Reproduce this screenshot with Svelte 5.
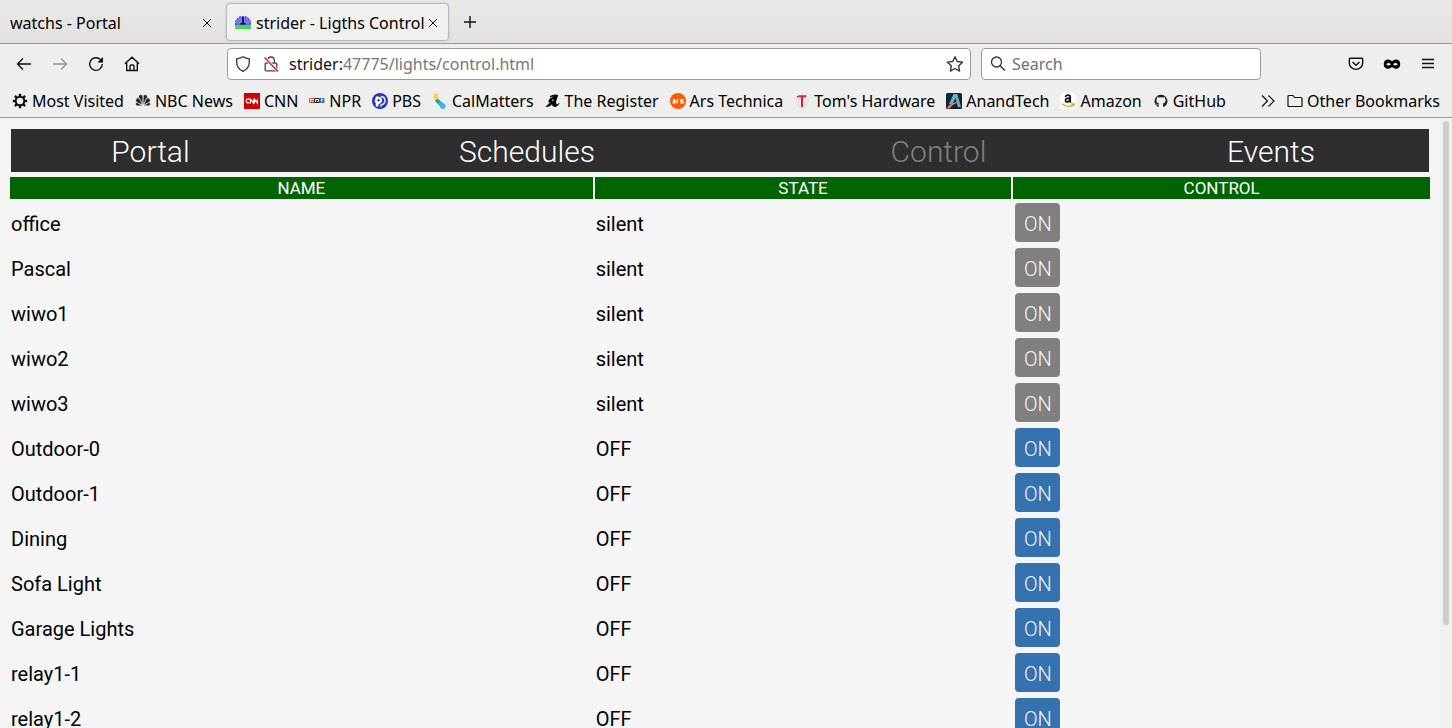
<script>
  const bookmarks = [
    { icon: 'gear', name: 'Most Visited' },
    { icon: 'nbc', name: 'NBC News' },
    { icon: 'cnn', name: 'CNN' },
    { icon: 'npr', name: 'NPR' },
    { icon: 'pbs', name: 'PBS' },
    { icon: 'cal', name: 'CalMatters' },
    { icon: 'register', name: 'The Register' },
    { icon: 'ars', name: 'Ars Technica' },
    { icon: 'toms', name: "Tom's Hardware" },
    { icon: 'anand', name: 'AnandTech' },
    { icon: 'amazon', name: 'Amazon' },
    { icon: 'github', name: 'GitHub' }
  ];
  const pages = ['Portal', 'Schedules', 'Control', 'Events'];
  const devices = [
    ['office', 'silent'],
    ['Pascal', 'silent'],
    ['wiwo1', 'silent'],
    ['wiwo2', 'silent'],
    ['wiwo3', 'silent'],
    ['Outdoor-0', 'OFF'],
    ['Outdoor-1', 'OFF'],
    ['Dining', 'OFF'],
    ['Sofa Light', 'OFF'],
    ['Garage Lights', 'OFF'],
    ['relay1-1', 'OFF'],
    ['relay1-2', 'OFF']
  ];
  const teeth = [0, 45, 90, 135, 180, 225, 270, 315];
</script>

<div class="browser">
  <header>
    <div class="tabs">
      <div class="tab">
        <span class="title">watchs - Portal</span>
        <button class="close" aria-label="Close tab"><svg width="16" height="16" viewBox="0 0 16 16"><path d="M4 4l8 8M12 4l-8 8" /></svg></button>
      </div>
      <div class="tab active">
        <svg class="fav" width="16" height="16" viewBox="0 0 16 16">
          <path d="M.5 10V6.500l1-2 1.500-1.500 2-1.300h6l2 1.300 1.500 1.500 1 2V10z" fill="#7777f6" stroke="#3838f0" stroke-dasharray="2 1" />
          <path d="M0 10h16v4H0z" fill="#3de04b" stroke="none" />
          <path d="M7.200 2h1.600v6h1.700v1.500h-5V8h1.700z" fill="#080820" stroke="none" />
        </svg>
        <span class="title">strider - Ligths Control</span>
        <button class="close" aria-label="Close tab"><svg width="16" height="16" viewBox="0 0 16 16"><path d="M4 4l8 8M12 4l-8 8" /></svg></button>
      </div>
      <button class="newtab" aria-label="New tab"><svg width="16" height="16" viewBox="0 0 16 16"><path d="M8 2v12M2 8h12" stroke-width="1.400" /></svg></button>
    </div>

    <div class="toolbar">
      <div class="navbuttons">
        <button aria-label="Back"><svg width="16" height="16" viewBox="0 0 16 16"><path d="M15 8H1.500M7 2.500L1.500 8 7 13.500" stroke-width="1.300" /></svg></button>
        <button aria-label="Forward" class="dim"><svg width="16" height="16" viewBox="0 0 16 16"><path d="M1 8h13.500M9 2.500L14.500 8 9 13.500" stroke-width="1.300" /></svg></button>
        <button aria-label="Reload"><svg width="16" height="16" viewBox="0 0 16 16"><path d="M12.500 3.600A6.300 6.300 0 1 0 14.300 8" stroke-width="1.400" /><path d="M15 1v5.500H9.500z" fill="#000" stroke="none" /></svg></button>
        <button aria-label="Home"><svg width="16" height="16" viewBox="0 0 16 16"><path d="M1 7.800L8 1.200l7 6.600M2.700 7v7.500h10.600V7M6 14.500V10.200q0-1.200 1.200-1.200h1.600q1.200 0 1.200 1.200v4.300" stroke-width="1.400" /></svg></button>
      </div>
      <div class="box url">
        <svg width="16" height="16" viewBox="0 0 16 16"><path d="M8 .8q3 1.800 6.300 2v3.400q0 6-6.300 9.100-6.300-3.100-6.300-9.100V2.800Q5 2.600 8 .8z" stroke="#333" stroke-width="1.300" /></svg>
        <svg class="lock" width="16" height="16" viewBox="0 0 16 16"><path d="M4.700 6.500V4.300a3.300 3.300 0 0 1 6.600 0v2.200M3 7.200h10q.8 0 .8.800v6q0 .8-.8.800H3q-.8 0-.8-.8V8q0-.8.800-.8z" stroke="#444" stroke-width="1.300" /><path d="M1.500 1.500l13.500 14" stroke="#fff" stroke-width="3" /><path d="M1.500 1.500l13.500 14" stroke="#f0104a" stroke-width="1.500" /></svg>
        <a class="address" href="#top"><b>strider:</b>47775/lights/control.html</a>
        <button aria-label="Bookmark this page"><svg width="18" height="18" viewBox="0 0 16 16"><path d="M8 1.500l2 4.300 4.700.6-3.400 3.200.8 4.700L8 12l-4.100 2.300.8-4.700L1.300 6.400 6 5.800z" stroke="#333" stroke-width="1.200" stroke-linejoin="round" /></svg></button>
      </div>
      <label class="box search">
        <svg width="16" height="16" viewBox="0 0 16 16"><circle cx="6.500" cy="6" r="5" stroke="#333" stroke-width="1.300" /><path d="M10 9.700l5 4.800" stroke="#333" stroke-width="1.400" /></svg>
        <input type="text" placeholder="Search" aria-label="Search" />
      </label>
      <div class="tools">
        <button aria-label="Save to Pocket"><svg width="16" height="16" viewBox="0 0 16 16"><path d="M2.600 2.200h10.800q1.300 0 1.300 1.300v3.400a6.700 6.500 0 0 1-13.400 0V3.500q0-1.300 1.300-1.300zM4.500 6L8 9.300 11.500 6" stroke-width="1.400" /></svg></button>
        <button aria-label="Private extension"><svg width="18" height="16" viewBox="0 0 18 16"><path d="M9 5.300Q7.200 3.600 5.200 3.600C2.300 3.600.8 5.400.8 8.200S2.300 12.800 5 12.800q2.200 0 4-1.700 1.800 1.700 4 1.700c2.700 0 4.200-1.800 4.200-4.600s-1.500-4.600-4.400-4.600q-2 0-3.800 1.700z" fill="#000" stroke="none" /><ellipse cx="5.600" cy="8.200" rx="1.900" ry="1.300" fill="#eee" stroke="none" /><ellipse cx="12.400" cy="8.200" rx="1.900" ry="1.300" fill="#eee" stroke="none" /></svg></button>
        <button aria-label="Menu"><svg width="16" height="16" viewBox="0 0 16 16"><path d="M2 3.500h12M2 7.500h12M2 11.500h12" stroke-width="1.300" /></svg></button>
      </div>
    </div>

    <nav class="bookmarks" aria-label="Bookmarks">
      {#each bookmarks as mark}
        <a href="#top">
          <svg width="16" height="16" viewBox="0 0 16 16" class="mark">
            {#if mark.icon === 'gear'}
              <circle cx="8" cy="8" r="4.300" stroke-width="2" />
              {#each teeth as angle}
                <path d="M8 .8v2.700" stroke-width="2.400" transform="rotate({angle} 8 8)" />
              {/each}
            {:else if mark.icon === 'nbc'}
              <g fill="#222" stroke="#eeeeec" stroke-width=".4">
                <path d="M7.700 12L4.800 5.500a2 2 0 1 1 2.900-1.500z" /><path d="M8.300 12l2.900-6.500a2 2 0 1 0-2.900-1.500z" />
                <path d="M7.300 12L1.800 9.200A2.100 2.100 0 1 1 4.400 5.600z" /><path d="M8.700 12l5.500-2.800a2.100 2.100 0 1 0-2.600-3.600z" />
                <path d="M7 12.700H2a1.700 1.700 0 0 1 0-3.300z" /><path d="M9 12.700h5a1.700 1.700 0 0 0 0-3.300z" />
              </g>
            {:else if mark.icon === 'cnn'}
              <rect width="16" height="16" fill="#d00000" stroke="none" />
              <path d="M5.400 6.300Q2.300 5.500 2.300 8t3.100 1.800M6.400 10.500V6.200l3 3.800V6.200M10.400 10.500V6.200l3 3.800V6" stroke="#fff" stroke-width="1.200" />
            {:else if mark.icon === 'npr'}
              <path d="M.5 5.500H5v4H.5z" stroke="#d75a40" fill="#fff" /><path d="M5.500 5.500h5v4h-5z" stroke="#222" fill="#fff" /><path d="M10.500 5h5v5h-5z" fill="#3d78bd" stroke="none" />
              <path d="M2.500 9V7.500H4V9" stroke="#d75a40" /><path d="M7.500 9.500v-2H9v1" stroke="#222" /><path d="M12.500 8.500v-2h1.500" stroke="#fff" />
            {:else if mark.icon === 'pbs'}
              <circle cx="8" cy="8" r="8" fill="#2638c4" stroke="none" />
              <path d="M3.800 13.500V10Q1.800 8.500 3 7l1-3.500h2Q10 4 10 7.300T6.500 11v2.500z" fill="#fff" stroke="none" />
              <path d="M8.800 3.500q4.200.3 4.200 4t-4 4.300v2" stroke="#fff" stroke-width="1.300" /><circle cx="6.500" cy="7.300" r="1.200" fill="#2638c4" stroke="none" />
            {:else if mark.icon === 'cal'}
              <path d="M1.500 1q2.500-1.200 4.500 0v5L3 7.500Q1 4 1.500 1z" fill="#ffd052" stroke="none" />
              <path d="M3 7.500L6 6l8 6.200-1.500 3.500H9Q8.500 13 6.500 12z" fill="#39b5e0" stroke="none" /><path d="M3 7.500L6 6l2.500 2.200-3 2.300z" fill="#2a9da5" stroke="none" />
            {:else if mark.icon === 'register'}
              <path d="M5 3q4-2.500 8.200-1-.8 3-2.200 6.500l.5 3L15 9.700q-3 4.800-6 4.100-2-.6-2-2.600-2.500 3.500-6.500 2.500l4.800-4.500-2 .2Q3 6 8 4q-1.500-.8-3 1z" fill="#080808" stroke="none" />
              <path d="M8.200 5.500L7 8h1.400z" fill="#fff" stroke="none" />
            {:else if mark.icon === 'ars'}
              <circle cx="8" cy="8" r="8" fill="#ff5a00" stroke="none" />
              <path d="M2.800 6.600h2.100v3.300H3.200V8.300h1.700M7 10.500V7.800q0-1.200 1.800-1.100M13.200 6.600h-2.400v1.600H13v1.700h-2.600" stroke="#fff" stroke-width="1.200" />
            {:else if mark.icon === 'toms'}
              <circle cx="8" cy="8.500" r="7" fill="#e5e5e5" stroke="none" />
              <path d="M2.800 3.500q1.500-1.500 4-1.300h5.500v2H9V14H7V4.500Q4.500 3.500 3 5z" fill="#d5243b" stroke="none" />
            {:else if mark.icon === 'anand'}
              <rect width="16" height="16" rx="1.500" fill="#10253b" stroke="none" />
              <path d="M7.500 1h3.700L15 14h-3.200L9.500 5 6.500 11H3z" fill="#62b5c9" stroke="none" /><path d="M1 15.500Q3 9 14.500 8.500 6 11 4 15.500z" fill="#f0783a" stroke="none" />
            {:else if mark.icon === 'amazon'}
              <rect width="16" height="16" rx="3" fill="#fff" stroke="none" />
              <path d="M5.300 3.900Q6 2.200 8 2.200q2.200 0 2.200 2v4.300l.8.900M9.800 5.200Q5.500 5 5.500 7.300q0 1.700 1.600 1.700 2.100 0 2.700-2.700" stroke-width="1.700" />
              <path d="M1.800 10.800q6 4.500 11.500 1.200M11 11.100l3-.3-.5 2.800" stroke="#ff9900" stroke-width="1.400" />
            {:else}
              <path d="M5.800 13.500q-.3.700-.8.500A6.500 6.500 0 1 1 11 14q-.8.200-.8-.5v-1.800q0-.8-.5-1.200 2.900-.3 2.900-3.200 0-1-.7-1.700.3-.9-.1-1.700-.8 0-1.800.7a6.400 6.400 0 0 0-4 0q-1-.7-1.800-.7-.4.800-.1 1.700-.7.700-.7 1.700 0 2.900 2.900 3.200-.5.400-.5 1.200-1.300.5-2-.7-.5-.8-1.100-.8 .6 2.300 3.100 2.300z" fill="#1b1f23" stroke="none" />
            {/if}
          </svg>
          {mark.name}
        </a>
      {/each}
      <button class="more" aria-label="More bookmarks"><svg width="16" height="16" viewBox="0 0 16 16"><path d="M2 2.500L7.500 8 2 13.500M8.500 2.500L14 8l-5.500 5.500" stroke-width="1.200" /></svg></button>
      <a href="#top"><svg width="16" height="16" viewBox="0 0 16 16"><path d="M2 2.500h4l1.500 2H14q1 0 1 1v7q0 1-1 1H2q-1 0-1-1v-9q0-1 1-1z" stroke-width="1.200" /></svg>Other Bookmarks</a>
    </nav>
  </header>

  <div class="viewport">
    <main>
      <nav class="pages" aria-label="Pages">
        {#each pages as page}
          <a href="#top" class:current={page === 'Control'}>{page}</a>
        {/each}
      </nav>
      <table>
        <colgroup><col class="wide" /><col /><col /></colgroup>
        <thead><tr><th>NAME</th><th>STATE</th><th>CONTROL</th></tr></thead>
        <tbody>
          {#each devices as [name, state]}
            <tr><td>{name}</td><td>{state}</td><td><button class:silent={state === 'silent'}>ON</button></td></tr>
          {/each}
        </tbody>
      </table>
    </main>
    <div class="scrollbar"><div class="thumb"></div></div>
  </div>
</div>

<style>
  :global(body) { margin: 0; }
  .browser { height: 100vh; display: flex; flex-direction: column; overflow: hidden; background: #f5f5f5; color: #000; }
  header { font: 16px/20px "Noto Sans", sans-serif; background: #eeeeec; border-bottom: 1px solid #9c9c98; }
  header svg { fill: none; stroke: #111; flex: none; }
  header button { display: flex; padding: 0; border: 0; background: none; }
  a { color: inherit; text-decoration: none; }
  .tabs { display: flex; align-items: center; height: 43px; border-bottom: 1px solid #9c9c98; background: linear-gradient(#eae9e7, #e2e1df); }
  .tab { display: flex; align-items: center; box-sizing: border-box; width: 223px; height: 38px; padding: 2px 7px 0 10px; border: 1px solid transparent; border-left: 0; margin-right: 3px; white-space: nowrap; }
  .tab.active { padding: 2px 8px 0; border: 1px solid #b9bac0; border-radius: 4px; background: #f0f0ee; box-shadow: 0 0 2px #b9bac0; margin-right: 13px; }
  .title { flex: 1; }
  .fav { margin-right: 5px; }
  .toolbar { display: flex; align-items: center; height: 40px; }
  .navbuttons { display: flex; gap: 20px; flex: 0 0 211px; padding-left: 16px; }
  .dim { opacity: .4; }
  .box { box-sizing: border-box; display: flex; align-items: center; height: 32px; background: #fff; border: 1px solid #9c9c98; border-radius: 4px; }
  .url { flex: 1; padding: 0 6px 0 7px; margin-right: 10px; }
  .lock { margin-left: 12px; }
  .address { flex: 1; margin-left: 10px; color: #777; }
  .address b { color: #111; font-weight: 400; }
  .search { flex: 0 0 280px; padding-left: 8px; gap: 6px; }
  .search input { flex: 1; min-width: 0; padding: 0; border: 0; outline: 0; background: none; font: inherit; }
  .search input::placeholder { color: #707070; }
  .tools { display: flex; flex: 0 0 104px; gap: 19px; padding: 0 0 0 87px; }
  .bookmarks { display: flex; align-items: center; height: 33px; gap: 11px; padding: 0 12px; white-space: nowrap; }
  .bookmarks a { display: flex; align-items: center; gap: 4px; }
  .more { margin-left: auto; }
  .viewport { flex: 1; min-height: 0; display: flex; overflow: hidden; font-family: Roboto, sans-serif; }
  main { flex: 1; padding: 11px 10px 0; }
  .pages { display: grid; grid-template-columns: 279fr 474fr 349fr 316fr; margin: 0 1px 3px; height: 43px; background: #2e2e2e; color: #fff; font-size: 30px; font-weight: 300; line-height: 46px; text-align: center; }
  .pages .current { color: #808080; }
  table { width: calc(100% + 4px); margin: 0 -2px; table-layout: fixed; border-spacing: 2px; }
  .wide { width: 41.15%; }
  th { height: 22px; padding: 0; background: #006400; color: #fff; font-size: 17px; font-weight: 400; line-height: 22px; }
  td { height: 43px; padding: 0 2px 0 1px; font-size: 20px; line-height: 24px; vertical-align: middle; }
  td:not(:last-child) { height: 41px; padding-top: 2px; }
  td:last-child { padding-left: 2px; }
  td button { display: block; box-sizing: border-box; width: 45px; height: 39px; padding: 2px 0 0; border: 0; border-radius: 4px; background: #3572b0; color: #f5f5f5; font: inherit; font-weight: 300; }
  td button.silent { background: #808080; }
  .scrollbar { flex: 0 0 12px; background: #f0f0f0; padding-top: 3px; box-sizing: border-box; }
  .thumb { width: 6px; height: 83%; margin: 0 auto; border-radius: 3px; background: #cdcdcd; }
</style>
